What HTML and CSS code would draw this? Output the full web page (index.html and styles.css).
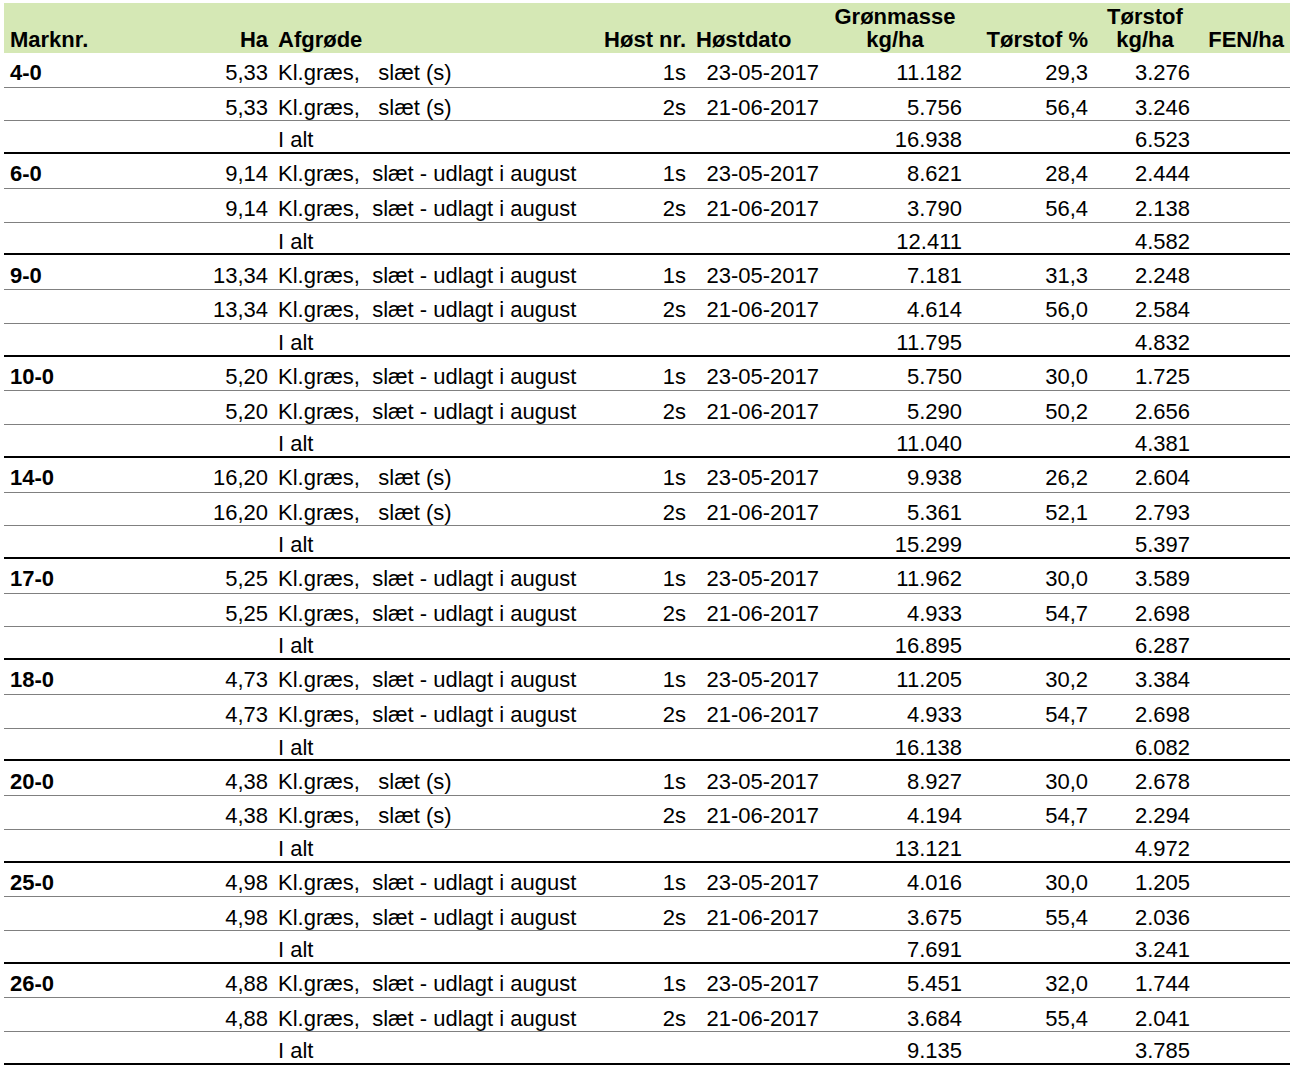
FILE: index.html
```html
<!DOCTYPE html>
<html lang="da">
<head>
<meta charset="utf-8">
<title>Høstresultater</title>
<link rel="stylesheet" href="styles.css">
</head>
<body>
<table class="sheet">
<colgroup>
<col class="c-mark"><col class="c-ha"><col class="c-afg"><col class="c-nr"><col class="c-dato"><col class="c-gron"><col class="c-tsp"><col class="c-tskg"><col class="c-fen">
</colgroup>
<thead>
<tr>
<th class="l">Marknr.</th>
<th class="r">Ha</th>
<th class="l">Afgrøde</th>
<th class="r">Høst nr.</th>
<th class="l dato">Høstdato</th>
<th class="c"><span class="hl">Grønmasse</span><span class="hl">kg/ha</span></th>
<th class="r">Tørstof %</th>
<th class="c"><span class="hl">Tørstof</span><span class="hl">kg/ha</span></th>
<th class="r fen">FEN/ha</th>
</tr>
</thead>
<tbody>
<tr class="r1"><td class="mk">4-0</td><td class="n">5,33</td><td class="afg">Kl.græs,   slæt (s)</td><td class="n">1s</td><td class="d">23-05-2017</td><td class="n">11.182</td><td class="n">29,3</td><td class="n kg">3.276</td><td></td></tr>
<tr class="r2"><td></td><td class="n">5,33</td><td class="afg">Kl.græs,   slæt (s)</td><td class="n">2s</td><td class="d">21-06-2017</td><td class="n">5.756</td><td class="n">56,4</td><td class="n kg">3.246</td><td></td></tr>
<tr class="tot"><td></td><td></td><td class="afg">I alt</td><td></td><td></td><td class="n">16.938</td><td></td><td class="n kg">6.523</td><td></td></tr>
</tbody>
<tbody>
<tr class="r1"><td class="mk">6-0</td><td class="n">9,14</td><td class="afg">Kl.græs,  slæt - udlagt i august</td><td class="n">1s</td><td class="d">23-05-2017</td><td class="n">8.621</td><td class="n">28,4</td><td class="n kg">2.444</td><td></td></tr>
<tr class="r2"><td></td><td class="n">9,14</td><td class="afg">Kl.græs,  slæt - udlagt i august</td><td class="n">2s</td><td class="d">21-06-2017</td><td class="n">3.790</td><td class="n">56,4</td><td class="n kg">2.138</td><td></td></tr>
<tr class="tot"><td></td><td></td><td class="afg">I alt</td><td></td><td></td><td class="n">12.411</td><td></td><td class="n kg">4.582</td><td></td></tr>
</tbody>
<tbody>
<tr class="r1"><td class="mk">9-0</td><td class="n">13,34</td><td class="afg">Kl.græs,  slæt - udlagt i august</td><td class="n">1s</td><td class="d">23-05-2017</td><td class="n">7.181</td><td class="n">31,3</td><td class="n kg">2.248</td><td></td></tr>
<tr class="r2"><td></td><td class="n">13,34</td><td class="afg">Kl.græs,  slæt - udlagt i august</td><td class="n">2s</td><td class="d">21-06-2017</td><td class="n">4.614</td><td class="n">56,0</td><td class="n kg">2.584</td><td></td></tr>
<tr class="tot"><td></td><td></td><td class="afg">I alt</td><td></td><td></td><td class="n">11.795</td><td></td><td class="n kg">4.832</td><td></td></tr>
</tbody>
<tbody>
<tr class="r1"><td class="mk">10-0</td><td class="n">5,20</td><td class="afg">Kl.græs,  slæt - udlagt i august</td><td class="n">1s</td><td class="d">23-05-2017</td><td class="n">5.750</td><td class="n">30,0</td><td class="n kg">1.725</td><td></td></tr>
<tr class="r2"><td></td><td class="n">5,20</td><td class="afg">Kl.græs,  slæt - udlagt i august</td><td class="n">2s</td><td class="d">21-06-2017</td><td class="n">5.290</td><td class="n">50,2</td><td class="n kg">2.656</td><td></td></tr>
<tr class="tot"><td></td><td></td><td class="afg">I alt</td><td></td><td></td><td class="n">11.040</td><td></td><td class="n kg">4.381</td><td></td></tr>
</tbody>
<tbody>
<tr class="r1"><td class="mk">14-0</td><td class="n">16,20</td><td class="afg">Kl.græs,   slæt (s)</td><td class="n">1s</td><td class="d">23-05-2017</td><td class="n">9.938</td><td class="n">26,2</td><td class="n kg">2.604</td><td></td></tr>
<tr class="r2"><td></td><td class="n">16,20</td><td class="afg">Kl.græs,   slæt (s)</td><td class="n">2s</td><td class="d">21-06-2017</td><td class="n">5.361</td><td class="n">52,1</td><td class="n kg">2.793</td><td></td></tr>
<tr class="tot"><td></td><td></td><td class="afg">I alt</td><td></td><td></td><td class="n">15.299</td><td></td><td class="n kg">5.397</td><td></td></tr>
</tbody>
<tbody>
<tr class="r1"><td class="mk">17-0</td><td class="n">5,25</td><td class="afg">Kl.græs,  slæt - udlagt i august</td><td class="n">1s</td><td class="d">23-05-2017</td><td class="n">11.962</td><td class="n">30,0</td><td class="n kg">3.589</td><td></td></tr>
<tr class="r2"><td></td><td class="n">5,25</td><td class="afg">Kl.græs,  slæt - udlagt i august</td><td class="n">2s</td><td class="d">21-06-2017</td><td class="n">4.933</td><td class="n">54,7</td><td class="n kg">2.698</td><td></td></tr>
<tr class="tot"><td></td><td></td><td class="afg">I alt</td><td></td><td></td><td class="n">16.895</td><td></td><td class="n kg">6.287</td><td></td></tr>
</tbody>
<tbody>
<tr class="r1"><td class="mk">18-0</td><td class="n">4,73</td><td class="afg">Kl.græs,  slæt - udlagt i august</td><td class="n">1s</td><td class="d">23-05-2017</td><td class="n">11.205</td><td class="n">30,2</td><td class="n kg">3.384</td><td></td></tr>
<tr class="r2"><td></td><td class="n">4,73</td><td class="afg">Kl.græs,  slæt - udlagt i august</td><td class="n">2s</td><td class="d">21-06-2017</td><td class="n">4.933</td><td class="n">54,7</td><td class="n kg">2.698</td><td></td></tr>
<tr class="tot"><td></td><td></td><td class="afg">I alt</td><td></td><td></td><td class="n">16.138</td><td></td><td class="n kg">6.082</td><td></td></tr>
</tbody>
<tbody>
<tr class="r1"><td class="mk">20-0</td><td class="n">4,38</td><td class="afg">Kl.græs,   slæt (s)</td><td class="n">1s</td><td class="d">23-05-2017</td><td class="n">8.927</td><td class="n">30,0</td><td class="n kg">2.678</td><td></td></tr>
<tr class="r2"><td></td><td class="n">4,38</td><td class="afg">Kl.græs,   slæt (s)</td><td class="n">2s</td><td class="d">21-06-2017</td><td class="n">4.194</td><td class="n">54,7</td><td class="n kg">2.294</td><td></td></tr>
<tr class="tot"><td></td><td></td><td class="afg">I alt</td><td></td><td></td><td class="n">13.121</td><td></td><td class="n kg">4.972</td><td></td></tr>
</tbody>
<tbody>
<tr class="r1"><td class="mk">25-0</td><td class="n">4,98</td><td class="afg">Kl.græs,  slæt - udlagt i august</td><td class="n">1s</td><td class="d">23-05-2017</td><td class="n">4.016</td><td class="n">30,0</td><td class="n kg">1.205</td><td></td></tr>
<tr class="r2"><td></td><td class="n">4,98</td><td class="afg">Kl.græs,  slæt - udlagt i august</td><td class="n">2s</td><td class="d">21-06-2017</td><td class="n">3.675</td><td class="n">55,4</td><td class="n kg">2.036</td><td></td></tr>
<tr class="tot"><td></td><td></td><td class="afg">I alt</td><td></td><td></td><td class="n">7.691</td><td></td><td class="n kg">3.241</td><td></td></tr>
</tbody>
<tbody>
<tr class="r1"><td class="mk">26-0</td><td class="n">4,88</td><td class="afg">Kl.græs,  slæt - udlagt i august</td><td class="n">1s</td><td class="d">23-05-2017</td><td class="n">5.451</td><td class="n">32,0</td><td class="n kg">1.744</td><td></td></tr>
<tr class="r2"><td></td><td class="n">4,88</td><td class="afg">Kl.græs,  slæt - udlagt i august</td><td class="n">2s</td><td class="d">21-06-2017</td><td class="n">3.684</td><td class="n">55,4</td><td class="n kg">2.041</td><td></td></tr>
<tr class="tot"><td></td><td></td><td class="afg">I alt</td><td></td><td></td><td class="n">9.135</td><td></td><td class="n kg">3.785</td><td></td></tr>
</tbody>
</table>
</body>
</html>
```

FILE: styles.css
```css
html, body {
  margin: 0;
  padding: 0;
  background: #ffffff;
}

body {
  padding: 3px 0 0 4px;
  font-family: "Liberation Sans", Arial, sans-serif;
  font-size: 22px;
  line-height: 22px;
  color: #000000;
}

.sheet {
  table-layout: fixed;
  width: 1286px;
  border-collapse: separate;
  border-spacing: 0;
}

.c-mark { width: 146px; }
.c-ha   { width: 122px; }
.c-afg  { width: 318px; }
.c-nr   { width: 100px; }
.c-dato { width: 134px; }
.c-gron { width: 142px; }
.c-tsp  { width: 126px; }
.c-tskg { width: 106px; }
.c-fen  { width: 92px; }

thead th {
  background: #d5e8b5;
  height: 50px;
  padding: 0 4px 2px 6px;
  vertical-align: bottom;
  font-weight: bold;
  white-space: nowrap;
  box-sizing: border-box;
}

th .hl {
  display: block;
  height: 22px;
  line-height: 20px;
}

th .hl + .hl {
  line-height: 22px;
}

th.l { text-align: left; }
th.r { text-align: right; padding-right: 4px; padding-left: 0; }
th.c { text-align: center; padding: 0 0 2px 0; }
th.fen { padding-right: 6px; }

tbody td {
  padding: 0;
  white-space: pre;
  vertical-align: top;
  overflow: hidden;
}

tr.r1 td {
  padding-top: 9.3px;
  padding-bottom: 2.5px;
  border-bottom: 1px solid #808080;
}

tr.r2 td {
  padding-top: 9.3px;
  padding-bottom: 1.3px;
  border-bottom: 1px solid #808080;
}

tr.tot td {
  padding-top: 8px;
  padding-bottom: 0.8px;
  border-bottom: 2px solid #000000;
}

td.mk {
  font-weight: bold;
  padding-left: 6px;
}

td.n {
  text-align: right;
  padding-right: 4px;
}

td.kg {
  padding-right: 8px;
}

td.afg {
  padding-left: 6px;
}

td.d {
  text-align: right;
  padding-right: 5px;
}
```
